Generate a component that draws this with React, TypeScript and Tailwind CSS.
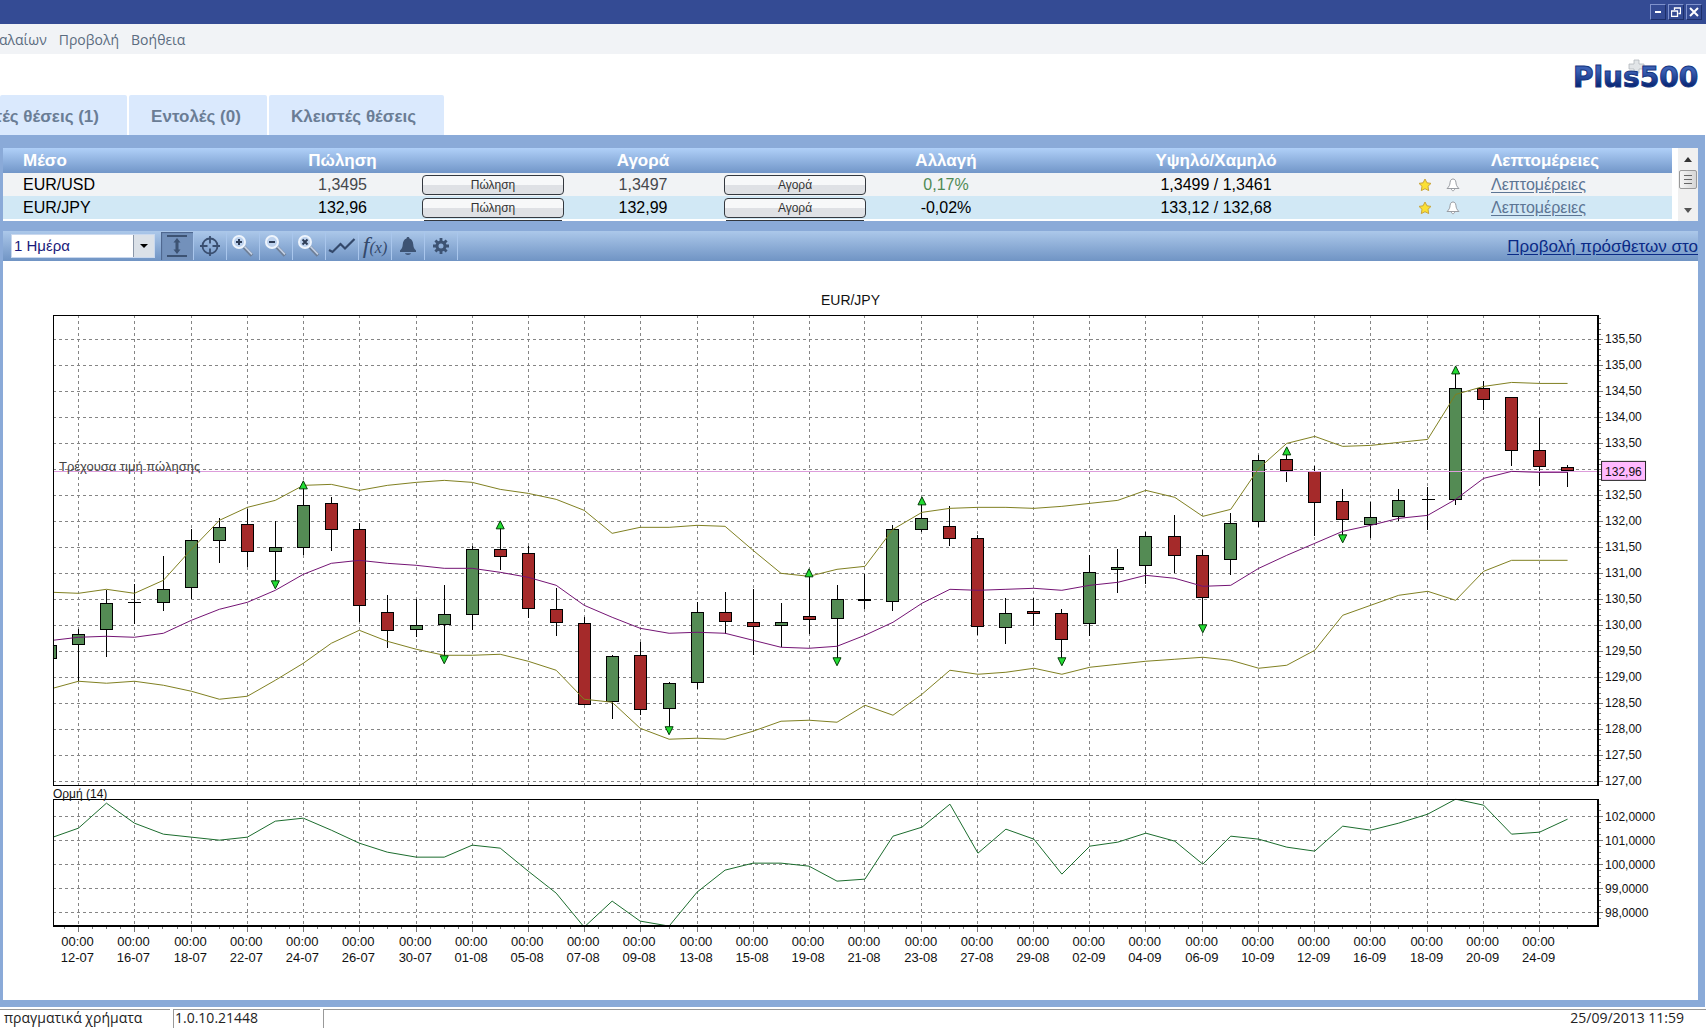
import { useState } from "react";
import type { ReactNode } from "react";
import clsx from "clsx";

type Candle = {
  high: number;
  top: number;
  bottom: number;
  low: number;
  up: boolean;
  mark?: "up" | "down";
};

const c = (
  high: number,
  top: number,
  bottom: number,
  low: number,
  dir: "g" | "r",
  mark?: "up" | "down"
): Candle => ({ high, top, bottom, low, up: dir === "g", mark });

const CANDLES: Candle[] = [
  c(629, 634, 644, 681, "g"),
  c(590, 603, 629, 657, "g"),
  c(584, 602, 602, 624, "g"),
  c(556, 589, 602, 611, "g"),
  c(529, 540, 587, 599, "g"),
  c(518, 527, 540, 563, "g"),
  c(509, 524, 551, 567, "r"),
  c(521, 547, 551, 581, "g", "down"),
  c(488, 505, 547, 555, "g", "up"),
  c(497, 503, 529, 551, "r"),
  c(523, 529, 605, 622, "r"),
  c(595, 612, 630, 648, "r"),
  c(599, 625, 629, 637, "g"),
  c(585, 614, 624, 656, "g", "down"),
  c(546, 549, 614, 630, "g"),
  c(528, 549, 556, 570, "r", "up"),
  c(546, 553, 608, 618, "r"),
  c(588, 609, 622, 636, "r"),
  c(617, 623, 704, 705, "r"),
  c(655, 656, 701, 719, "g"),
  c(642, 655, 709, 715, "r"),
  c(682, 683, 708, 727, "g", "down"),
  c(602, 612, 682, 689, "g"),
  c(592, 612, 621, 634, "r"),
  c(589, 622, 626, 655, "r"),
  c(603, 622, 625, 647, "g"),
  c(576, 616, 619, 634, "r", "up"),
  c(585, 599, 618, 658, "g", "down"),
  c(574, 599, 600, 609, "g"),
  c(525, 529, 601, 611, "g"),
  c(504, 518, 529, 532, "g", "up"),
  c(506, 526, 538, 546, "r"),
  c(535, 538, 626, 635, "r"),
  c(598, 613, 627, 644, "g"),
  c(598, 611, 613, 626, "r"),
  c(609, 613, 639, 658, "r", "down"),
  c(555, 572, 623, 636, "g"),
  c(549, 567, 569, 593, "g"),
  c(532, 536, 565, 584, "g"),
  c(515, 536, 555, 573, "r"),
  c(550, 555, 597, 625, "r", "down"),
  c(513, 523, 559, 575, "g"),
  c(455, 460, 521, 527, "g"),
  c(454, 459, 470, 482, "r", "up"),
  c(466, 471, 502, 536, "r"),
  c(489, 501, 519, 535, "r", "down"),
  c(502, 517, 524, 538, "g"),
  c(489, 500, 516, 521, "g"),
  c(487, 499, 499, 530, "g"),
  c(373, 388, 499, 505, "g", "up"),
  c(381, 388, 399, 410, "r"),
  c(397, 397, 450, 466, "r"),
  c(418, 450, 466, 486, "r"),
  c(465, 467, 470, 487, "r"),
];

// indicator lines, first value sits on the left edge of the plot
const UPPER = [
  592, 593, 589, 593, 580, 549, 520, 507, 500, 485, 484, 490, 485, 482, 480,
  482, 489, 493, 499, 510, 533, 527, 527, 525, 526, 550, 573, 576, 569, 566,
  529, 512, 508, 507, 507, 508, 506, 503, 500, 490, 497, 516, 509, 468, 443,
  436, 446, 445, 442, 439, 394, 386, 382, 383, 383,
];
const MIDDLE = [
  640, 637, 636, 637, 633, 620, 609, 602, 590, 574, 563, 560, 563, 565, 568,
  568, 572, 577, 585, 605, 617, 628, 633, 632, 633, 640, 647, 648, 646, 635,
  622, 603, 589, 590, 589, 588, 590, 585, 582, 575, 578, 586, 585, 568, 555,
  543, 531, 525, 518, 515, 499, 478, 471, 472, 472,
];
const LOWER = [
  688, 681, 683, 681, 685, 691, 699, 696, 680, 663, 643, 630, 641, 649, 655,
  655, 654, 661, 670, 699, 702, 728, 739, 738, 739, 731, 721, 720, 722, 705,
  715, 694, 670, 674, 672, 668, 674, 667, 664, 661, 659, 657, 660, 668, 665,
  650, 615, 605, 595, 591, 600, 571, 560, 560, 560,
];
const MOMENTUM = [
  837, 828, 803, 823, 834, 837, 840, 837, 821, 818, 830, 843, 852, 857, 857,
  845, 848, 871, 893, 927, 901, 921, 926, 892, 870, 863, 863, 866, 881, 879,
  836, 827, 804, 853, 829, 839, 874, 846, 842, 833, 841, 864, 836, 839, 847,
  851, 826, 830, 823, 814, 799, 805, 834, 832, 819,
];

const DATES = [
  "12-07", "16-07", "18-07", "22-07", "24-07", "26-07", "30-07", "01-08",
  "05-08", "07-08", "09-08", "13-08", "15-08", "19-08", "21-08", "23-08",
  "27-08", "29-08", "02-09", "04-09", "06-09", "10-09", "12-09", "16-09",
  "18-09", "20-09", "24-09",
];

const LEFT = 53;
const RIGHT = 1599;
const xAt = (i: number) => Math.floor(78.7 + i * 28.112) + 0.5;

const toPoints = (ys: number[]) =>
  ys.map((y, n) => `${n === 0 ? LEFT : xAt(n - 1)},${y + 0.5}`).join(" ");

const range = (n: number) => Array.from({ length: n }, (_, i) => i);

function Marker({ x, y, dir }: { x: number; y: number; dir: "up" | "down" }) {
  const d =
    dir === "up"
      ? `M${x} ${y - 7} L${x + 4} ${y + 1} H${x - 4} Z`
      : `M${x} ${y + 8} L${x + 4} ${y} H${x - 4} Z`;
  return <path d={d} fill="#22dd33" stroke="#063c08" />;
}

function Chart() {
  return (
    <svg
      viewBox="3 261 1696 739"
      className="block w-full bg-white"
      fontFamily="'Liberation Sans', Arial, sans-serif"
      role="img"
      aria-label="EUR/JPY"
    >
      <defs>
        <clipPath id="pricePlot">
          <rect x={LEFT} y="315" width={RIGHT - LEFT} height="470" />
        </clipPath>
        <clipPath id="momentumPlot">
          <rect x={LEFT} y="799" width={RIGHT - LEFT} height="127" />
        </clipPath>
      </defs>

      <text x="851" y="305" fontSize="14" textAnchor="middle" fill="#111">
        EUR/JPY
      </text>

      {/* Grid */}
      <g stroke="#858585" strokeDasharray="3 3" shapeRendering="crispEdges">
        {range(18).map((i) => (
          <path key={i} d={`M${LEFT} ${339.5 + i * 26}H${RIGHT}`} />
        ))}
        {range(5).map((i) => (
          <path key={i} d={`M${LEFT} ${816.5 + i * 24}H${RIGHT}`} />
        ))}
        {DATES.map((d, i) => (
          <path key={d} d={`M${xAt(i * 2)} 315V785M${xAt(i * 2)} 801V925`} />
        ))}
      </g>

      {/* Candles */}
      <g clipPath="url(#pricePlot)" shapeRendering="crispEdges" stroke="#000">
        <rect x="44.5" y="645.5" width="12" height="13" fill="#548b54" />
        {CANDLES.map((k, i) => {
          const x = xAt(i);
          return (
            <g key={i}>
              <path d={`M${x} ${k.high}V${k.low}`} />
              {k.top === k.bottom ? (
                <path d={`M${x - 6} ${k.top + 0.5}H${x + 7}`} />
              ) : (
                <rect
                  x={x - 6}
                  y={k.top + 0.5}
                  width="12"
                  height={k.bottom - k.top}
                  fill={k.up ? "#548b54" : "#a52a2a"}
                />
              )}
            </g>
          );
        })}
      </g>

      <path d="M53 471.5H1602" stroke="#dd9ddb" shapeRendering="crispEdges" />
      <text x="59" y="471" fontSize="13" fill="#444">
        Τρέχουσα τιμή πώλησης
      </text>

      <g fill="none" clipPath="url(#pricePlot)">
        <polyline points={toPoints(UPPER)} stroke="#808020" />
        <polyline points={toPoints(LOWER)} stroke="#808020" />
        <polyline points={toPoints(MIDDLE)} stroke="#731373" />
      </g>
      <polyline
        points={toPoints(MOMENTUM)}
        fill="none"
        stroke="#1a6b2c"
        clipPath="url(#momentumPlot)"
      />
      {CANDLES.map((k, i) =>
        k.mark ? (
          <Marker
            key={i}
            x={xAt(i)}
            y={k.mark === "up" ? k.high : k.low}
            dir={k.mark}
          />
        ) : null
      )}

      {/* Frames */}
      <g fill="none" stroke="#000" shapeRendering="crispEdges">
        <path d="M1599 315.5H53.5V785.5H1599" />
        <path d="M1599 315V786" strokeWidth="2" />
        <path d="M1599 799.5H53.5V926" />
        <path d="M53 926H1600M1599 799V927" strokeWidth="2" />
      </g>

      {/* Ticks */}
      <g stroke="#777" shapeRendering="crispEdges">
        {range(90).map((i) => (
          <path key={i} d={`M1600 ${Math.round(318.2 + i * 5.2) + 0.5}h2`} />
        ))}
        {range(18).map((i) => (
          <path key={i} d={`M1600 ${339.5 + i * 26}h4`} />
        ))}
        {range(20).map((i) => (
          <path key={i} d={`M1600 ${804.5 + i * 6}h2`} />
        ))}
        {range(5).map((i) => (
          <path key={i} d={`M1600 ${816.5 + i * 24}h4`} />
        ))}
        {range(108).map((i) => (
          <path
            key={i}
            d={`M${Math.floor(64.6 + i * 14.056) + 0.5} 927v${i % 4 === 1 ? 5 : 2}`}
          />
        ))}
      </g>

      {/* Axis labels */}
      <g fontSize="12" fill="#111">
        {range(18).map((i) => {
          const price = (135.5 - i * 0.5).toFixed(2).replace(".", ",");
          return i === 5 ? null : (
            <text key={i} x="1606" y={343 + i * 26}>
              {price}
            </text>
          );
        })}
        {range(5).map((i) => (
          <text key={i} x="1606" y={821 + i * 24}>
            {102 - i},0000
          </text>
        ))}
      </g>
      <rect x="1602.5" y="461.5" width="44" height="19" fill="#ffb9ff" stroke="#222" />
      <text x="1606" y="476" fontSize="12" fill="#111">
        132,96
      </text>
      <g fontSize="13" fill="#111" textAnchor="middle">
        {DATES.map((d, i) => (
          <g key={d}>
            <text x={xAt(i * 2) - 1} y="946">
              00:00
            </text>
            <text x={xAt(i * 2) - 1} y="962">
              {d}
            </text>
          </g>
        ))}
      </g>
      <text x="53" y="798" fontSize="12" fill="#111">
        Ορμή (14)
      </text>
    </svg>
  );
}

function Logo() {
  return (
    <svg viewBox="0 0 132 40" className="mt-1 mr-0.5 h-10 w-[132px]" role="img" aria-label="Plus500">
      <defs>
        <linearGradient id="logoFill" x1="0" y1="0" x2="0" y2="1">
          <stop offset="0.3" stopColor="#3a5fb4" />
          <stop offset="0.75" stopColor="#0a2878" />
        </linearGradient>
      </defs>
      <path
        d="M62 2H67V6H72V11H67V15H62V11H57V6H62Z"
        fill="#e2e5e8"
        stroke="#b3b7bd"
        strokeWidth="0.8"
      />
      <text
        x="1"
        y="29"
        fontSize="28"
        fontWeight="bold"
        fontFamily="'DejaVu Sans', sans-serif"
        fill="url(#logoFill)"
        stroke="#16367f"
        strokeWidth="1"
      >
        Plus500
      </text>
    </svg>
  );
}

function StarIcon() {
  return (
    <svg viewBox="0 0 14 14" className="mx-auto block h-3.5 w-3.5">
      <path
        d="M7 1 L8.9 4.8 L13 5.4 L10 8.3 L10.7 12.6 L7 10.7 L3.3 12.6 L4 8.3 L1 5.4 L5.1 4.8 Z"
        fill="#fbe034"
        stroke="#c9a53c"
        strokeLinejoin="round"
      />
    </svg>
  );
}

function BellOutline() {
  return (
    <svg viewBox="0 0 14 14" className="mx-auto block h-3.5 w-3.5">
      <path
        d="M7 1 C5.6 1 4.3 2 4.1 4.2 C3.9 7 3.2 8.6 1 10.5 H13 C10.8 8.6 10.1 7 9.9 4.2 C9.7 2 8.4 1 7 1 Z M5.4 11 C5.6 13.3 8.4 13.3 8.6 11"
        fill="#fff"
        stroke="#9a9da3"
        strokeLinejoin="round"
      />
    </svg>
  );
}

function Magnifier({ children }: { children: ReactNode }) {
  return (
    <svg viewBox="0 0 24 24" className="h-6 w-6">
      <path d="M13 13 L21 21.5" stroke="#6f7f97" strokeWidth="3.6" />
      <path d="M13.6 12.6 L21 20.4" stroke="#c3d0e4" strokeWidth="1.6" />
      <circle cx="8" cy="8" r="6" fill="#bdd2ee" stroke="#eef4fc" strokeWidth="2" />
      <g stroke="#2e3d57" strokeWidth="2" fill="none">
        {children}
      </g>
    </svg>
  );
}

const TOOLS: { label: string; icon: ReactNode }[] = [
  {
    label: "Κλίμακα",
    icon: (
      <svg viewBox="0 0 24 24" className="h-6 w-6" fill="#3d5373">
        <path d="M2 1H22V3H2Z M2 21H22V23H2Z" />
        <path d="M12 4 L15.5 8.5 H13.5 V15.5 H15.5 L12 20 L8.5 15.5 H10.5 V8.5 H8.5 Z" />
      </svg>
    ),
  },
  {
    label: "Στόχαστρο",
    icon: (
      <svg viewBox="0 0 24 24" className="h-6 w-6" fill="none" stroke="#3a4f70">
        <circle cx="12" cy="12" r="7.5" strokeWidth="1.8" />
        <path d="M12 2V9.5M12 14.5V22M2 12H9.5M14.5 12H22" strokeWidth="1.8" />
      </svg>
    ),
  },
  {
    label: "Μεγέθυνση",
    icon: (
      <Magnifier>
        <path d="M5 8H11M8 5V11" />
      </Magnifier>
    ),
  },
  {
    label: "Σμίκρυνση",
    icon: (
      <Magnifier>
        <path d="M5 8H11" />
      </Magnifier>
    ),
  },
  {
    label: "Επαναφορά",
    icon: (
      <Magnifier>
        <path d="M5.5 5.5L10.5 10.5M10.5 5.5L5.5 10.5" />
      </Magnifier>
    ),
  },
  {
    label: "Γραμμή",
    icon: (
      <svg viewBox="0 0 28 24" className="h-6 w-7" fill="none" stroke="#34496b">
        <path d="M1 16 L4.5 18 L12.5 10 L17 14.5 L26.5 5" strokeWidth="2.2" />
      </svg>
    ),
  },
  {
    label: "Δείκτες",
    icon: (
      <span className="flex items-baseline font-['Liberation_Serif',serif] leading-6 text-[#34496b] italic">
        <span className="text-2xl leading-6">f</span>
        <span className="text-base leading-6">(x)</span>
      </span>
    ),
  },
  {
    label: "Ειδοποίηση",
    icon: (
      <svg viewBox="0 0 24 24" className="h-6 w-6" fill="#3d5373">
        <path d="M12 3 C11 3 10.6 3.6 10.5 4.4 C8 5.2 7 7.4 6.8 10 C6.6 13.2 5.8 15 4 16.5 V18 H20 V16.5 C18.2 15 17.4 13.2 17.2 10 C17 7.4 16 5.2 13.5 4.4 C13.4 3.6 13 3 12 3 Z" />
        <path d="M9 19.3H15C14.6 21.6 9.4 21.6 9 19.3Z" />
      </svg>
    ),
  },
  {
    label: "Ρυθμίσεις",
    icon: (
      <svg viewBox="0 0 24 24" className="h-6 w-6" fill="none" stroke="#3d5373">
        <circle cx="12" cy="12" r="4" strokeWidth="3" />
        <path
          d="M12 4V8M12 16V20M4 12H8M16 12H20M6.4 6.4L9 9M15 15L17.6 17.6M6.4 17.6L9 15M15 9L17.6 6.4"
          strokeWidth="2.8"
        />
      </svg>
    ),
  },
];

const QUOTES = [
  {
    name: "EUR/USD",
    sell: "1,3495",
    buy: "1,3497",
    change: "0,17%",
    range: "1,3499 / 1,3461",
    priceClass: "text-[#45484d]",
    changeClass: "text-[#4f8a54]",
    rowClass: "bg-[#f1f3f5]",
  },
  {
    name: "EUR/JPY",
    sell: "132,96",
    buy: "132,99",
    change: "-0,02%",
    range: "133,12 / 132,68",
    priceClass: "text-black",
    changeClass: "text-black",
    rowClass: "bg-[#d1e8f5]",
  },
];

function TradeButton({ children }: { children: ReactNode }) {
  return (
    <button className="mx-auto block h-5 w-[142px] rounded border border-[#33383f] bg-linear-to-b from-[#f7f8f9] from-50% to-[#dfe1e5] to-50% text-xs leading-4 text-[#333]">
      {children}
    </button>
  );
}

function QuoteTable() {
  return (
    <table className="w-full table-fixed border-collapse bg-white text-base leading-5">
      <colgroup>
        <col className="w-[287px]" />
        <col className="w-[105px]" />
        <col className="w-[196px]" />
        <col className="w-[104px]" />
        <col className="w-[200px]" />
        <col className="w-[102px]" />
        <col />
        <col className="w-[28px]" />
        <col className="w-[28px]" />
        <col className="w-[205px]" />
      </colgroup>
      <thead>
        <tr className="h-[25px] bg-linear-to-b from-[#b0d0f8] to-[#7296c8] text-[17px] text-white">
          <th className="p-0 pl-5 text-left">Μέσο</th>
          <th className="p-0">Πώληση</th>
          <th className="p-0" />
          <th className="p-0">Αγορά</th>
          <th className="p-0" />
          <th className="p-0">Αλλαγή</th>
          <th className="p-0 pl-6">Υψηλό/Χαμηλό</th>
          <th className="p-0" />
          <th className="p-0" />
          <th className="p-0 pl-6 text-left">Λεπτομέρειες</th>
        </tr>
      </thead>
      <tbody>
        {QUOTES.map((q) => (
          <tr key={q.name} className={clsx("h-[23px] text-center", q.rowClass)}>
            <td className="p-0 pl-5 text-left">{q.name}</td>
            <td className={clsx("p-0", q.priceClass)}>{q.sell}</td>
            <td className="p-0">
              <TradeButton>Πώληση</TradeButton>
            </td>
            <td className={clsx("p-0", q.priceClass)}>{q.buy}</td>
            <td className="p-0">
              <TradeButton>Αγορά</TradeButton>
            </td>
            <td className={clsx("p-0", q.changeClass)}>{q.change}</td>
            <td className="p-0 pl-6">{q.range}</td>
            <td className="p-0">
              <StarIcon />
            </td>
            <td className="p-0">
              <BellOutline />
            </td>
            <td className="p-0 pl-6 text-left">
              <a href="#details" className="text-[#5c7594] underline underline-offset-2">
                Λεπτομέρειες
              </a>
            </td>
          </tr>
        ))}
        {/* next row is scrolled out, only its button edges show */}
        <tr className="h-0.5">
          <td className="p-0" colSpan={2} />
          <td className="p-0">
            <div className="mx-auto mt-px h-px w-[138px] bg-[#33383f]" />
          </td>
          <td className="p-0" />
          <td className="p-0">
            <div className="mx-auto mt-px h-px w-[138px] bg-[#33383f]" />
          </td>
          <td className="p-0" colSpan={5} />
        </tr>
      </tbody>
    </table>
  );
}

function Scrollbar() {
  return (
    <div className="flex w-5 shrink-0 flex-col items-center justify-between bg-[#f0f0f0]">
      <div className="flex flex-col items-center">
        <button aria-label="Πάνω" className="flex h-[22px] w-5 items-center justify-center">
          <svg viewBox="0 0 8 5" className="h-[5px] w-2">
            <path d="M0 5L4 0L8 5Z" fill="#333" />
          </svg>
        </button>
        <div className="flex h-[19px] w-[18px] flex-col items-center justify-center gap-[3px] rounded-xs border border-[#999] bg-linear-to-r from-[#f5f5f5] to-[#d6d6d6]">
          <span className="h-px w-2 bg-[#666]" />
          <span className="h-px w-2 bg-[#666]" />
          <span className="h-px w-2 bg-[#666]" />
        </div>
      </div>
      <button aria-label="Κάτω" className="flex h-[22px] w-5 items-center justify-center">
        <svg viewBox="0 0 8 5" className="h-[5px] w-2">
          <path d="M0 0L4 5L8 0Z" fill="#555" />
        </svg>
      </button>
    </div>
  );
}

function WindowButton({ label, children }: { label: string; children: ReactNode }) {
  return (
    <button
      aria-label={label}
      className="flex h-4 w-4 items-center justify-center border border-t-[#7f92cc] border-r-[#1d2f6b] border-b-[#1d2f6b] border-l-[#7f92cc]"
    >
      <svg viewBox="0 0 10 10" className="h-2.5 w-2.5" fill="none" stroke="#fff">
        {children}
      </svg>
    </button>
  );
}

const TAB =
  "h-10 overflow-hidden rounded-t-xs bg-[#dae9fd] pt-1 text-[17px] font-bold whitespace-nowrap text-[#6a7d95]";

export default function App() {
  const [tool, setTool] = useState(0);

  return (
    <div className="flex min-h-screen w-full flex-col overflow-hidden bg-white font-['Liberation_Sans',Arial,sans-serif] text-black">
      <header className="flex h-6 items-center justify-end gap-0.5 bg-[#344b94] pr-1">
        <WindowButton label="Ελαχιστοποίηση">
          <path d="M2 5H8" strokeWidth="2" />
        </WindowButton>
        <WindowButton label="Επαναφορά">
          <path d="M3.5 3V1H9.5V6.5H7.5M0.5 4H6.5V9.5H0.5Z" strokeWidth="1.3" />
        </WindowButton>
        <WindowButton label="Κλείσιμο">
          <path d="M1 1L9 9M9 1L1 9" strokeWidth="2" />
        </WindowButton>
      </header>

      <nav className="flex h-[30px] items-center gap-3 bg-[#f1f3f6] pt-0.5 font-['Open_Sans','Noto_Sans',sans-serif] text-sm text-[#5b6c80]">
        <button className="-ml-px">αλαίων</button>
        <button>Προβολή</button>
        <button>Βοήθεια</button>
      </nav>

      <div className="flex h-[81px] justify-between">
        <div className="flex items-end gap-0.5">
          <button className={clsx(TAB, "flex w-[127px] items-center justify-end pr-7")}>
            τές θέσεις (1)
          </button>
          <button className={clsx(TAB, "w-[138px] pr-1")}>Εντολές (0)</button>
          <button className={clsx(TAB, "w-[175px] pr-1.5")}>Κλειστές θέσεις</button>
        </div>
        <Logo />
      </div>

      <main className="mr-px flex grow flex-col bg-[#8aaad8] pt-[13px] pr-[7px] pb-[7px] pl-[3px]">
        <section className="flex bg-white">
          <div className="min-w-0 grow">
            <QuoteTable />
          </div>
          <div className="w-1.5 shrink-0" />
          <Scrollbar />
        </section>

        <div className="mt-2.5 flex h-[30px] items-center overflow-hidden bg-linear-to-b from-[#acc8ea] to-[#7094c4] pl-2">
          <div className="relative h-6 w-[144px] shrink-0">
            <select
              aria-label="Χρονικό διάστημα"
              className="h-6 w-full appearance-none border border-[#c9d8ee] bg-white pl-0.5 text-[15px] text-[#1a1a7a]"
            >
              <option>1 Ημέρα</option>
            </select>
            <span className="pointer-events-none absolute top-px right-px flex h-[22px] w-[21px] items-center justify-center border-l border-[#8b97a8] bg-[#dbe1e8]">
              <svg viewBox="0 0 8 4" className="h-1 w-2">
                <path d="M0 0H8L4 4Z" />
              </svg>
            </span>
          </div>
          <div className="ml-1.5 flex shrink-0">
            {TOOLS.map((t, i) => (
              <button
                key={t.label}
                aria-label={t.label}
                onClick={() => setTool(i)}
                className={clsx(
                  "flex h-7 w-[33px] items-center justify-center border-r border-[#a9c6ec]",
                  i === tool && "bg-[#7391bb] shadow-[inset_1px_1px_1px_#4c648c]"
                )}
              >
                {t.icon}
              </button>
            ))}
          </div>
          <div className="flex grow justify-end pt-0.5">
            <a href="#more" className="text-[17px] whitespace-nowrap text-[#0a2a86] underline underline-offset-2">
              Προβολή πρόσθετων στο
            </a>
          </div>
        </div>

        <Chart />
      </main>

      <footer className="flex h-[21px] items-end gap-[3px] font-['Open_Sans','Noto_Sans',sans-serif] text-sm leading-4 text-[#222]">
        <span className="h-[19px] w-[170px] border-t border-[#999] pl-1">
          πραγματικά χρήματα
        </span>
        <span className="h-[19px] w-[147px] border-t border-l border-[#999] pl-px">
          1.0.10.21448
        </span>
        <span className="h-[19px] grow border-t border-l border-[#999] pr-[22px] text-right">
          25/09/2013 11:59
        </span>
      </footer>
    </div>
  );
}
